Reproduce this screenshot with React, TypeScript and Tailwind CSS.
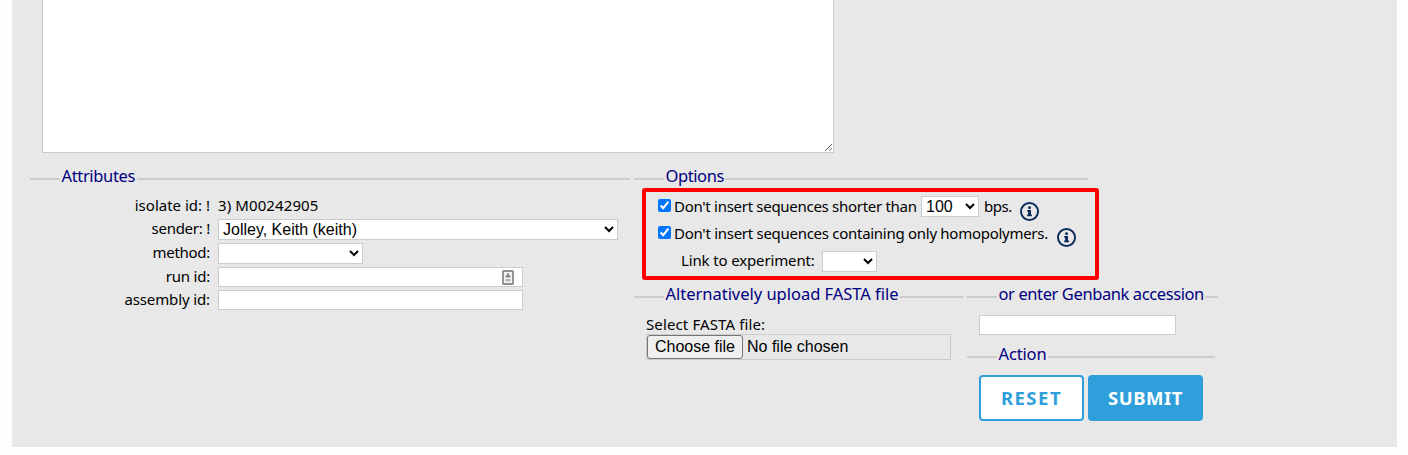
import type { ReactNode } from "react";

function Legend({ children, className = "" }: { children: ReactNode; className?: string }) {
  return (
    <div className="flex h-5 items-center">
      <span className="h-0.5 w-[30px] bg-[#cccccc]" />
      <span className={`h-5 whitespace-nowrap pl-[1.5px] pr-[1.5px] text-[16.5px] leading-[14px] text-[#000080] ${className}`}>
        {children}
      </span>
      <span className="h-0.5 flex-1 bg-[#cccccc]" />
    </div>
  );
}

function Label({ children, className = "" }: { children: ReactNode; className?: string }) {
  return <label className={`mr-2 w-[180px] whitespace-nowrap text-right leading-[18px] ${className}`}>{children}</label>;
}

function InfoIcon({ className = "" }: { className?: string }) {
  return (
    <svg viewBox="0 0 512 512" className={`size-[19px] shrink-0 ${className}`} fill="#0b2b5a">
      <path d="M256 0a256 256 0 1 0 0 512 256 256 0 1 0 0-512zm0 460a204 204 0 1 1 0-408 204 204 0 1 1 0 408z" />
      <circle cx="256" cy="152" r="40" />
      <path d="M204 216h80c7 0 12 5 12 12v108h14c7 0 12 5 12 12v24c0 7-5 12-12 12H204c-7 0-12-5-12-12v-24c0-7 5-12 12-12h14v-72h-14c-7 0-12-5-12-12v-24c0-7 5-12 12-12z" />
    </svg>
  );
}

const field = "border border-[#cccccc] bg-white text-[16px] text-black font-['Liberation_Sans',sans-serif]";

export default function App() {
  return (
    <main className="h-[455px] overflow-hidden bg-[#fefefe] pl-3 font-['Noto_Sans',sans-serif] text-[15px] text-black">
      <form className="h-[447px] w-[1385px] bg-[#e8e8e8] pl-[18px]" onSubmit={(e) => e.preventDefault()}>
        <textarea className="ml-3 block h-[153px] w-[792px] border border-t-0 border-[#cccccc] bg-white" />
        <div className="flex gap-1 pt-4">
          <section className="w-[600px]">
            <Legend className="tracking-[-0.35px]">Attributes</Legend>
            <div className="mt-1 flex h-6 items-center">
              <Label>isolate id: !</Label>
              <span className="tracking-[0.1px]">3) M00242905</span>
            </div>
            <div className="mt-0.5 flex h-[21px]">
              <Label className="tracking-[-0.25px]">sender: !</Label>
              <select className={`${field} h-[21px] w-[400px]`}>
                <option>Jolley, Keith (keith)</option>
              </select>
            </div>
            <div className="mt-[3px] flex h-[21px]">
              <Label className="tracking-[-0.3px]">method:</Label>
              <select className={`${field} h-[21px] w-[145px]`}>
                <option></option>
              </select>
            </div>
            <div className="mt-[3px] flex h-5">
              <Label className="tracking-[-0.2px]">run id:</Label>
              <div className={`${field} flex h-5 w-[305px] items-center justify-end pr-2`}>
                <input className="h-4 min-w-0 flex-1" />
                <svg viewBox="0 0 12 15" className="h-[15px] w-3">
                  <rect x="1" y="1" width="10" height="13" rx="0.6" fill="#f3f3f3" stroke="#909090" strokeWidth="1.9" />
                  <path d="M5.2 3h1.6v2.2h1.6V7.6H3.6V5.2h1.6z" fill="#858585" />
                  <path d="M3.4 9h5.2v2.3H3.4z" fill="#b5b5b5" />
                </svg>
              </div>
            </div>
            <div className="mt-[3px] flex h-5">
              <Label className="tracking-[-0.12px]">assembly id:</Label>
              <input className={`${field} h-5 w-[305px]`} />
            </div>
          </section>

          <div className="w-[584px]">
            <section className="relative h-[118px] w-[454px]">
              <Legend className="tracking-[-0.42px]">Options</Legend>
              <div className="pointer-events-none absolute left-2 top-[19px] h-[92px] w-[457px] rounded-[3px] border-4 border-[#ff0000]" />
              <div className="mt-[7px] flex h-[21px] pl-6">
                <input type="checkbox" defaultChecked className="mt-[3px] size-[13px]" />
                <span className="ml-[3px] w-[247px] whitespace-nowrap leading-[20px] tracking-[-0.29px]">
                  Don't insert sequences shorter than
                </span>
                <select className={`${field} h-[21px] w-[58px]`}>
                  <option>100</option>
                </select>
                <span className="ml-[5px] w-9 leading-[20px] tracking-[-0.5px]">bps.</span>
                <InfoIcon className="mt-[6px]" />
              </div>
              <div className="mt-[6px] flex h-[21px] pl-6">
                <input type="checkbox" defaultChecked className="mt-[3px] size-[13px]" />
                <span className="ml-[3px] w-[383px] whitespace-nowrap leading-[20px] tracking-[-0.28px]">
                  Don't insert sequences containing only homopolymers.
                </span>
                <InfoIcon className="mt-[5px]" />
              </div>
              <div className="mt-[7px] flex h-[21px] pl-[47px]">
                <span className="w-[141px] whitespace-nowrap leading-[18px] tracking-[-0.14px]">Link to experiment:</span>
                <select className={`${field} h-[21px] w-[55px]`}>
                  <option></option>
                </select>
              </div>
            </section>

            <div className="flex gap-1">
              <section className="w-[329px]">
                <Legend className="tracking-[-0.02px]">Alternatively upload FASTA file</Legend>
                <div className="mt-[7px] pl-3">
                  <div className="h-5 whitespace-nowrap leading-[20px] tracking-[0.12px]">Select FASTA file:</div>
                  <div className="flex h-[26px] w-[305px] border border-[#cccccc] font-['Liberation_Sans',sans-serif] text-[16px] leading-[22px] text-black">
                    <button
                      type="button"
                      className="h-6 w-24 whitespace-nowrap rounded-[3px] border border-[#767676] bg-[#efefef]"
                    >
                      Choose file
                    </button>
                    <span className="ml-1 mt-px">No file chosen</span>
                  </div>
                </div>
              </section>
              <div className="w-[251px]">
                <Legend className="tracking-[-0.4px]">or enter Genbank accession</Legend>
                <input className={`${field} ml-3 mt-2 block h-5 w-[197px]`} />
                <div className="mt-3 w-[248px]">
                  <Legend className="tracking-[-0.15px]">Action</Legend>
                </div>
                <div className="ml-3 mt-2 flex gap-1 text-[18.5px] font-bold leading-[42px]">
                  <button
                    type="reset"
                    className="h-[46px] w-[105px] rounded-[4px] border-2 border-[#2f9fdc] bg-white tracking-[1.5px] text-[#2f9fdc]"
                  >
                    RESET
                  </button>
                  <button
                    type="submit"
                    className="h-[46px] w-[115px] rounded-[4px] border-2 border-[#2f9fdc] bg-[#2f9fdc] tracking-[0.5px] text-white"
                  >
                    SUBMIT
                  </button>
                </div>
              </div>
            </div>
          </div>
        </div>
      </form>
    </main>
  );
}
